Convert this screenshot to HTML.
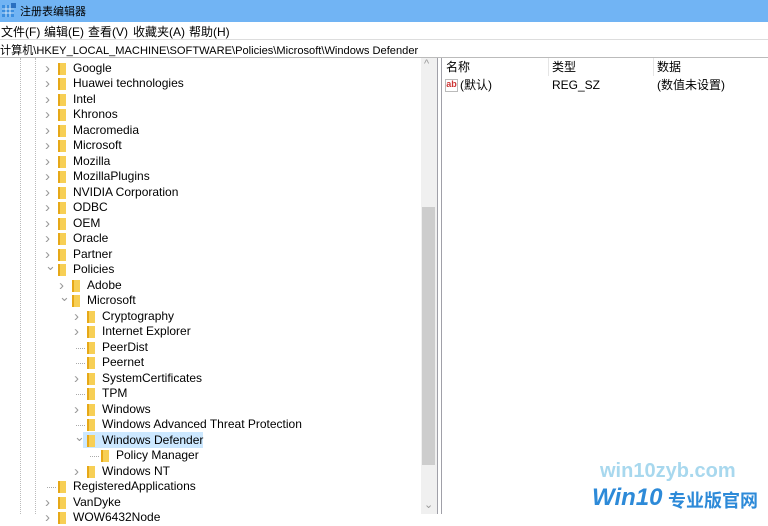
<!DOCTYPE html>
<html><head><meta charset="utf-8"><style>
*{margin:0;padding:0;box-sizing:border-box}
body{width:768px;height:514px;overflow:hidden;background:#fff;font-family:"Liberation Sans","Noto Sans CJK SC",sans-serif;font-size:12px;color:#000;position:relative}
.title{position:absolute;left:0;top:0;width:768px;height:22px;background:#71b4f4;}
.title span{position:absolute;left:20px;top:3px;font-size:11px}
.menu{position:absolute;top:22px;left:0;height:17px;width:768px;background:#fff;font-size:12px}
.menu span{position:absolute;top:1px}
.addr{position:absolute;top:39px;left:0;width:768px;height:19px;border-top:1px solid #ddd;border-bottom:1px solid #bbb;background:#fff;font-size:11.1px}
.addr span{position:absolute;left:0;top:2px}
.r{position:absolute;height:15px;line-height:15px;white-space:nowrap}
.f{position:absolute;width:8px;height:12px;background:#f7cf55;border-left:2px solid #e6a818}
.a{position:absolute;color:#999;font-size:11px}
.sb{position:absolute;left:421px;top:58px;width:16px;height:456px;background:#f0f0f0}
.th{position:absolute;left:422px;top:207px;width:13px;height:258px;background:#cdcdcd}
.vl{position:absolute;top:58px;width:1px;height:456px;background:#a0a0a8}
.vd{position:absolute;width:0;border-left:1px dotted #bbb}
</style></head><body>
<div class="title"><svg style="position:absolute;left:2px;top:3px" width="14" height="15"><rect x="0" y="2" width="12" height="12" fill="#3a8ee0"/><path d="M0 6h12M0 10h12M4 2v12M8 2v12" stroke="#cfe6fb"/><rect x="9" y="0" width="5" height="5" fill="#2a6fc0"/></svg><span>注册表编辑器</span></div>
<div class="menu"><span style="left:1px">文件(F)</span><span style="left:44px">编辑(E)</span><span style="left:88px">查看(V)</span><span style="left:133px">收藏夹(A)</span><span style="left:189px">帮助(H)</span></div>
<div class="addr"><span>计算机\HKEY_LOCAL_MACHINE\SOFTWARE\Policies\Microsoft\Windows Defender</span></div>
<div class="vd" style="left:20px;top:58px;height:456px"></div>
<div class="vd" style="left:35px;top:58px;height:456px"></div>
<div id="tree"></div>
<div class="sb"></div><div class="th"></div>
<div class="a" style="left:424px;top:58px">^</div>
<div class="a" style="left:424px;top:498px">⌄</div>
<div class="vl" style="left:437px"></div><div class="vl" style="left:441px"></div>
<div class="r" style="left:446px;top:60px">名称</div>
<div class="r" style="left:552px;top:60px">类型</div>
<div class="r" style="left:657px;top:60px">数据</div>
<div class="vl" style="left:548px;top:58px;height:18px;background:#e5e5e5"></div>
<div class="vl" style="left:653px;top:58px;height:18px;background:#e5e5e5"></div>
<div style="position:absolute;left:445px;top:79px;width:13px;height:13px;border:1px solid #bbb;background:#fff;font-size:9px;color:#c33;font-weight:bold;line-height:9px;text-align:center">ab</div>
<div class="r" style="left:460px;top:78px">(默认)</div>
<div class="r" style="left:552px;top:78px">REG_SZ</div>
<div class="r" style="left:657px;top:78px">(数值未设置)</div>
<div style="position:absolute;left:600px;top:460px;font:bold 20px 'Liberation Sans',sans-serif;color:#a8d8ee">win10zyb.com</div>
<div style="position:absolute;left:592px;top:484px;font:italic bold 24px 'Liberation Sans',sans-serif;color:#2d8ad8">Win10</div>
<div style="position:absolute;left:668px;top:487px;font:bold 18px 'Noto Sans CJK SC',sans-serif;color:#2d8ad8">专业版官网</div>
<script>
var rows=[[1,'Google','>'],[1,'Huawei technologies','>'],[1,'Intel','>'],[1,'Khronos','>'],[1,'Macromedia','>'],[1,'Microsoft','>'],[1,'Mozilla','>'],[1,'MozillaPlugins','>'],[1,'NVIDIA Corporation','>'],[1,'ODBC','>'],[1,'OEM','>'],[1,'Oracle','>'],[1,'Partner','>'],[1,'Policies','v'],[2,'Adobe','>'],[2,'Microsoft','v'],[3,'Cryptography','>'],[3,'Internet Explorer','>'],[3,'PeerDist','-'],[3,'Peernet','-'],[3,'SystemCertificates','>'],[3,'TPM','-'],[3,'Windows','>'],[3,'Windows Advanced Threat Protection','-'],[3,'Windows Defender','v'],[4,'Policy Manager','-'],[3,'Windows NT','>'],[1,'RegisteredApplications','-'],[1,'VanDyke','>'],[1,'WOW6432Node','>']];
var h='';rows.forEach(function(r,i){var y=60.5+i*15.5,l=r[0],fx=[0,58,72,87,101][l],ax=fx-12;
if(r[1]=='Windows Defender')h+='<div style="position:absolute;left:'+(fx-4)+'px;top:'+(y-1)+'px;width:'+(120)+'px;height:16px;background:#cce8ff"></div>';
h+='<div class="f" style="left:'+fx+'px;top:'+(y+2)+'px"></div>';
var s=r[2]=='>'?'›':r[2]=='v'?'⌄':'';if(r[2]=='-')h+='<div style="position:absolute;left:'+(ax+1)+'px;top:'+(y+8)+'px;width:9px;border-top:1px dotted #aaa"></div>';
else h+='<div class="a" style="left:'+(ax-1)+'px;top:'+(r[2]=='v'?y-4:y-1)+'px;font-size:'+(r[2]=='v'?13:15)+'px">'+s+'</div>';
h+='<div class="r" style="left:'+(fx+15)+'px;top:'+y+'px">'+r[1]+'</div>';});
document.getElementById('tree').innerHTML=h;
</script>
</body></html>
